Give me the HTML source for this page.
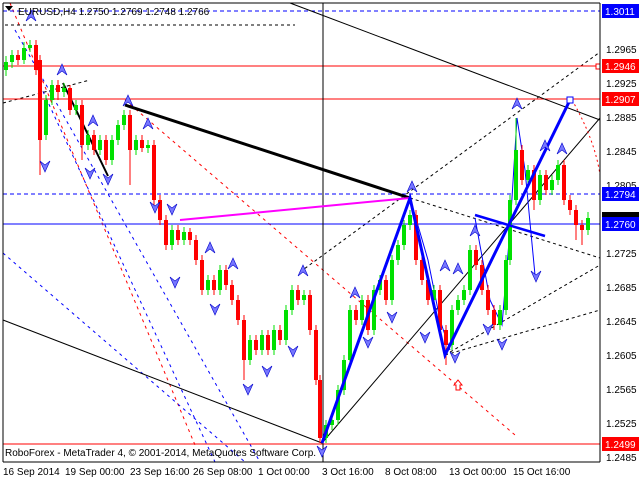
<!DOCTYPE html>
<html><head><meta charset="utf-8"><style>
html,body{margin:0;padding:0;background:#fff;width:640px;height:480px;overflow:hidden}
svg{display:block;font-family:"Liberation Sans",sans-serif;font-size:10px}
</style></head><body>
<svg width="640" height="480" xmlns="http://www.w3.org/2000/svg">
<rect x="0" y="0" width="640" height="480" fill="#fff"/>
<g fill="none">
<line x1="10" y1="3" x2="195" y2="445" stroke="#f00" stroke-dasharray="3,4"/>
<line x1="125" y1="100" x2="515" y2="435" stroke="#f00" stroke-dasharray="3,4"/>
<line x1="15" y1="30" x2="260" y2="462" stroke="#00f" stroke-dasharray="3,4"/>
<line x1="40" y1="85" x2="215" y2="462" stroke="#00f" stroke-dasharray="3,4"/>
<line x1="3" y1="253" x2="245" y2="462" stroke="#00f" stroke-dasharray="3,4"/>
<line x1="5" y1="25" x2="295" y2="25" stroke="#000" stroke-dasharray="3,3"/>
<line x1="3" y1="103" x2="90" y2="80" stroke="#000" stroke-dasharray="3,3"/>
<line x1="300" y1="272" x2="600" y2="52" stroke="#000" stroke-dasharray="3,3"/>
<line x1="410" y1="198" x2="600" y2="258" stroke="#000" stroke-dasharray="3,3"/>
<line x1="445" y1="355" x2="600" y2="265" stroke="#000" stroke-dasharray="3,3"/>
<line x1="445" y1="355" x2="600" y2="310" stroke="#000" stroke-dasharray="3,3"/>
<line x1="3" y1="11" x2="600" y2="11" stroke="#00f" stroke-dasharray="4,3"/>
<line x1="3" y1="66" x2="600" y2="66" stroke="#f00"/>
<line x1="3" y1="99" x2="600" y2="99" stroke="#f00"/>
<line x1="3" y1="194" x2="600" y2="194" stroke="#00f" stroke-dasharray="4,3"/>
<line x1="3" y1="224" x2="600" y2="224" stroke="#00f"/>
<line x1="3" y1="444" x2="600" y2="444" stroke="#f00"/>
<line x1="323" y1="3" x2="323" y2="462" stroke="#000"/>
<line x1="3" y1="320" x2="322" y2="443" stroke="#000"/>
<line x1="322" y1="443" x2="600" y2="118" stroke="#000"/>
<line x1="290" y1="3" x2="600" y2="120" stroke="#000"/>
<line x1="63" y1="83" x2="108" y2="176" stroke="#000" stroke-width="2"/>
<line x1="125" y1="105" x2="410" y2="198" stroke="#000" stroke-width="3"/>
<line x1="180" y1="220" x2="410" y2="198" stroke="#f0f" stroke-width="2"/>
<polyline points="410,198 428,260 440,320 450,350" stroke="#00f" stroke-width="1"/>
<polyline points="475,218 490,300 502,325 510,230 517,118 525,170 535,275" stroke="#00f"/>
</g>
<!-- candles -->
<path fill="none" stroke="#00e000" stroke-width="1" d="M6,56V76M12,50V68M24,42V64M30,40V52M46,95V140M52,80V105M64,83V97M76,100V115M88,130V150M100,135V155M112,135V165M118,120V145M124,110V130M136,135V155M148,140V153M172,225V250M184,227V245M208,275V295M220,265V295M250,335V365M262,330V355M274,325V355M286,305V345M292,285V315M304,290V305M326,420V443M332,415V430M338,385V425M344,355V395M350,305V365M362,295V325M374,285V335M380,275V295M392,255V305M398,240V265M404,220V250M410,210V230M434,285V305M452,305V350M458,295V315M464,285V305M470,245V295M500,305V330M506,255V315M510,195V265M516,118V205M528,165V185M540,170V205M552,175V195M558,160V185M588,212V235"/>
<path fill="none" stroke="#00e000" stroke-width="4" d="M6,70V62M12,62V55M24,60V48M30,48V45M46,135V100M52,100V85M64,92V88M76,110V105M88,145V135M100,150V140M112,160V140M118,140V125M124,125V115M136,150V140M148,148V145M172,245V230M184,240V232M208,290V280M220,290V270M250,360V340M262,350V335M274,350V330M286,340V310M292,310V290M304,300V295M326,438V425M332,425V420M338,420V390M344,390V360M350,360V310M362,320V300M374,330V290M380,290V280M392,300V260M398,260V245M404,245V225M410,225V215M434,300V290M452,345V310M458,310V300M464,300V290M470,290V250M500,325V310M506,310V260M510,260V200M516,200V150M528,180V170M540,200V175M552,190V180M558,180V165M588,230V218"/>
<path fill="none" stroke="#f00" stroke-width="1" d="M18,50V65M36,40V75M40,55V175M58,80V100M70,85V115M82,100V160M94,130V155M106,135V165M130,110V185M142,135V152M154,140V210M160,195V225M166,215V250M178,225V245M190,228V245M196,235V265M202,255V295M214,275V295M226,265V290M232,280V305M238,295V325M244,315V380M256,335V355M268,330V355M280,325V345M298,285V305M310,290V335M316,325V385M320,375V443M356,305V325M368,295V335M386,275V305M416,210V265M422,255V285M428,275V305M440,285V335M446,325V365M476,245V270M482,260V295M488,285V315M494,305V330M522,145V185M534,165V210M546,170V195M564,160V205M570,195V215M576,205V240M582,220V245"/>
<path fill="none" stroke="#f00" stroke-width="4" d="M18,55V60M36,45V70M40,60V140M58,85V92M70,88V110M82,105V145M94,135V150M106,140V160M130,115V150M142,140V148M154,145V200M160,200V220M166,220V245M178,230V240M190,232V240M196,240V260M202,260V290M214,280V290M226,270V285M232,285V300M238,300V320M244,320V360M256,340V350M268,335V350M280,330V340M298,290V300M310,295V330M316,330V380M320,380V438M356,310V320M368,300V330M386,280V300M416,215V260M422,260V280M428,280V300M440,290V330M446,330V345M476,250V265M482,265V290M488,290V310M494,310V325M522,150V180M534,170V200M546,175V190M564,165V200M570,200V210M576,210V225M582,225V230"/>
<g fill="none">
<polyline points="322,443 410,198 445,355 570,100" stroke="#00f" stroke-width="3"/>
<line x1="475" y1="215" x2="545" y2="236" stroke="#00f" stroke-width="2.5"/>
<path d="M572,100 Q595,140 600,175" stroke="#f00" stroke-dasharray="2,3"/>
<rect x="567" y="97" width="6" height="6" stroke="#00f" fill="#fff"/>
<rect x="596" y="64" width="5" height="5" stroke="#f00" fill="#fff"/>
</g>
<g fill="#77f" stroke="#00c" stroke-width="0.6">
<path d="M26,21L31,10L36,21L31,17Z"/>
<path d="M57,75L62,64L67,75L62,71Z"/>
<path d="M123,106L128,95L133,106L128,102Z"/>
<path d="M143,129L148,118L153,129L148,125Z"/>
<path d="M88,126L93,115L98,126L93,122Z"/>
<path d="M205,253L210,242L215,253L210,249Z"/>
<path d="M228,269L233,258L238,269L233,265Z"/>
<path d="M298,276L303,265L308,276L303,272Z"/>
<path d="M350,298L355,287L360,298L355,294Z"/>
<path d="M407,192L412,181L417,192L412,188Z"/>
<path d="M440,271L445,260L450,271L445,267Z"/>
<path d="M453,274L458,263L463,274L458,270Z"/>
<path d="M470,236L475,225L480,236L475,232Z"/>
<path d="M512,109L517,98L522,109L517,105Z"/>
<path d="M540,151L545,140L550,151L545,147Z"/>
<path d="M557,154L562,143L567,154L562,150Z"/>
<path d="M40,161L45,172L50,161L45,165Z"/>
<path d="M85,168L90,179L95,168L90,172Z"/>
<path d="M103,174L108,185L113,174L108,178Z"/>
<path d="M150,202L155,213L160,202L155,206Z"/>
<path d="M167,204L172,215L177,204L172,208Z"/>
<path d="M170,277L175,288L180,277L175,281Z"/>
<path d="M210,304L215,315L220,304L215,308Z"/>
<path d="M243,384L248,395L253,384L248,388Z"/>
<path d="M262,366L267,377L272,366L267,370Z"/>
<path d="M288,346L293,357L298,346L293,350Z"/>
<path d="M317,446L322,457L327,446L322,450Z"/>
<path d="M363,337L368,348L373,337L368,341Z"/>
<path d="M387,312L392,323L397,312L392,316Z"/>
<path d="M420,332L425,343L430,332L425,336Z"/>
<path d="M450,352L455,363L460,352L455,356Z"/>
<path d="M483,324L488,335L493,324L488,328Z"/>
<path d="M497,339L502,350L507,339L502,343Z"/>
<path d="M531,271L536,282L541,271L536,275Z"/>
</g>
<path d="M454,385L458,380L462,385L460,385L460,390L456,390L456,385Z" fill="#fff" stroke="#f00"/>
<rect x="600" y="0" width="40" height="480" fill="#fff"/>
<line x1="600" y1="3" x2="600" y2="462" stroke="#000"/>
<line x1="3" y1="462" x2="600" y2="462" stroke="#000"/>
<line x1="3" y1="3" x2="3" y2="462" stroke="#000"/>
<line x1="3" y1="3" x2="600" y2="3" stroke="#000"/>
<g fill="#000">
<text x="606" y="53">1.2965</text>
<text x="606" y="87">1.2925</text>
<text x="606" y="121">1.2885</text>
<text x="606" y="155">1.2845</text>
<text x="606" y="189">1.2805</text>
<text x="606" y="257">1.2725</text>
<text x="606" y="291">1.2685</text>
<text x="606" y="325">1.2645</text>
<text x="606" y="359">1.2605</text>
<text x="606" y="393">1.2565</text>
<text x="606" y="427">1.2525</text>
<text x="606" y="461">1.2485</text>
</g>
<g fill="#fff">
<rect x="602" y="4" width="37" height="14" fill="#00f"/><text x="605" y="15">1.3011</text>
<rect x="602" y="59" width="37" height="14" fill="#f00"/><text x="605" y="70">1.2946</text>
<rect x="602" y="92" width="37" height="14" fill="#f00"/><text x="605" y="103">1.2907</text>
<rect x="602" y="187" width="37" height="14" fill="#00f"/><text x="605" y="198">1.2794</text>
<rect x="602" y="212" width="37" height="6" fill="#000"/>
<rect x="602" y="217" width="37" height="14" fill="#00f"/><text x="605" y="228">1.2760</text>
<rect x="602" y="437" width="37" height="14" fill="#f00"/><text x="605" y="448">1.2499</text>
</g>
<g fill="#000">
<text x="18" y="15">EURUSD,H4  1.2750 1.2769 1.2748 1.2766</text>
<path d="M5,6L13,6L9,11Z"/>
<text x="5" y="456">RoboForex - MetaTrader 4, © 2001-2014, MetaQuotes Software Corp.</text>
<text x="3" y="475">16 Sep 2014</text>
<text x="65" y="475">19 Sep 00:00</text>
<text x="130" y="475">23 Sep 16:00</text>
<text x="193" y="475">26 Sep 08:00</text>
<text x="258" y="475">1 Oct 00:00</text>
<text x="322" y="475">3 Oct 16:00</text>
<text x="385" y="475">8 Oct 08:00</text>
<text x="449" y="475">13 Oct 00:00</text>
<text x="513" y="475">15 Oct 16:00</text>
</g>
</svg>
</body></html>
